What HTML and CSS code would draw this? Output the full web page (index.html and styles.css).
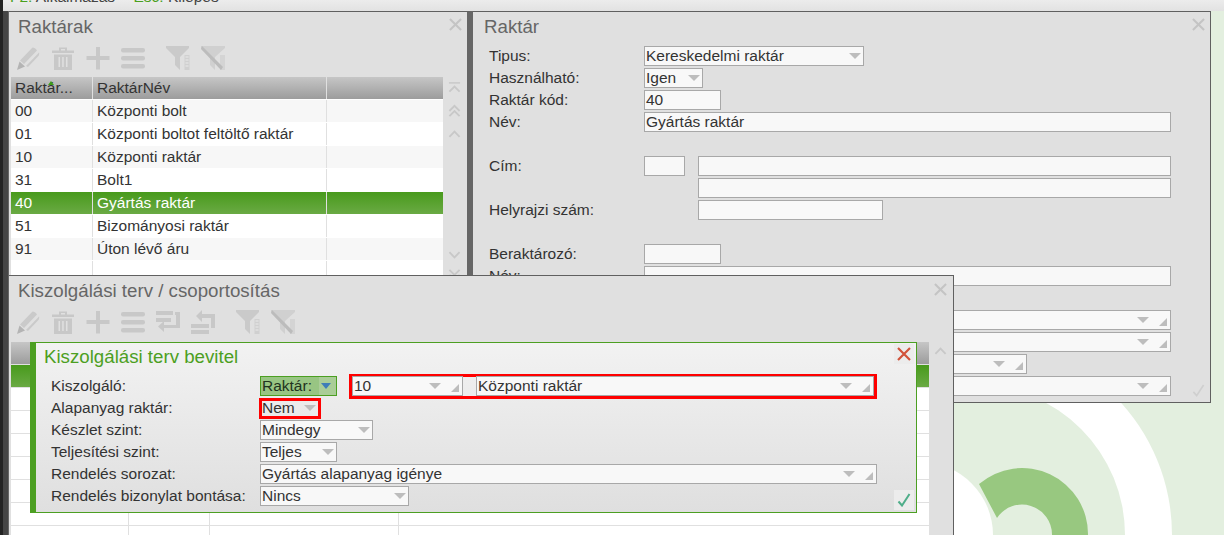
FILE: index.html
```html
<!DOCTYPE html>
<html lang="hu">
<head>
<meta charset="utf-8">
<title>Raktárak</title>
<link rel="stylesheet" href="styles.css">
</head>
<body>
<svg class="art" width="1224" height="535" viewBox="0 0 1224 535">
  <rect width="1224" height="535" fill="#e3efdf"/>
  <circle cx="975" cy="535" r="197" fill="#fff"/>
  <circle cx="975" cy="535" r="150" fill="#e3efdf"/>
  <path d="M979 484 A66 66 0 0 1 1088 535 L1052 535 A30 30 0 0 0 997 518 Z" fill="#98c880"/>
  <circle cx="920" cy="535" r="73" fill="#fff"/>
</svg>
<div class="edge"></div>
<div class="topbar"><span class="key">F2:</span> Alkalmazás <span class="sep"></span><span class="key">Esc:</span> Kilépés</div>

<svg class="defs" width="0" height="0">
  <defs>
    <symbol id="i-pencil" viewBox="0 0 24 24"><path d="M8 18 21 4.500c-1-2-3-3-4.500-3L4 14.500z M10 20 23 6.500c.5 1.500 0 3-1 4L12 21z" fill="#cacaca"/><path d="M3.500 15.500 9 20.500 1 24z" fill="#b4b4b4"/></symbol>
    <symbol id="i-trash" viewBox="0 0 24 24"><path d="M1 4.500h22v2.500H1z M8 4.500V1.500h8v3h-2V3h-4v1.500z" fill="#c8c8c8"/><path d="M3 8.500h18V24H3z" fill="#c8c8c8"/><path d="M7.500 11h1.500v10H7.500z M11.200 11h1.500v10h-1.500z M15 11h1.500v10H15z" fill="#e0e0e0"/></symbol>
    <symbol id="i-plus" viewBox="0 0 24 24"><path d="M10 1h4v9h9.500v4H14v9.500h-4V14H.500v-4H10z" fill="#c8c8c8"/></symbol>
    <symbol id="i-list" viewBox="0 0 24 24"><rect x="0" y="2" width="24" height="4.500" rx="2" fill="#c8c8c8"/><rect x="0" y="10" width="24" height="4.500" rx="2" fill="#c8c8c8"/><rect x="0" y="18" width="24" height="4.500" rx="2" fill="#c8c8c8"/></symbol>
    <symbol id="i-filter" viewBox="0 0 24 24"><path d="M0 0h23v2L14 11v13l-5-5v-8L0 2z" fill="#cacaca"/><path d="M18.500 9h5v15h-5z" fill="#d0d0d0"/><path d="M19.500 10.500h3v1h-3zm0 3h3v1h-3zm0 3h3v1h-3zm0 3h3v1h-3z" fill="#eaeaea"/></symbol>
    <symbol id="i-nofilter" viewBox="0 0 24 24"><path d="M0 0h24v2L14 11v13l-5-5v-8L0 2z" fill="#d0d0d0"/><path d="M19 9h5v15h-5z" fill="#d4d4d4"/><path d="M1 0 22 21l-2 3L0 3z" fill="#bcbcbc"/></symbol>
    <symbol id="i-swap1" viewBox="0 0 24 24"><path d="M0 1h17v4H0zM0 8h15v4H0z" fill="#c8c8c8"/><path d="M19 2h5v16H8v4L2 16.500 8 11v4h12V5h-1z" fill="#c8c8c8"/></symbol>
    <symbol id="i-swap2" viewBox="0 0 24 24"><path d="M0 14h18v4H0zM0 20h18v4H0z" fill="#c8c8c8"/><path d="M11 0v4h13v14h-4V8H11v4L5 6z" fill="#c8c8c8"/></symbol>
    <symbol id="i-top" viewBox="0 0 14 14"><path d="M1 1.500h12" stroke="#c8c8c8" stroke-width="1.600" fill="none"/><path d="M1.500 11 7 5.500l5.500 5.500" stroke="#c8c8c8" stroke-width="2" fill="none"/></symbol>
    <symbol id="i-dup" viewBox="0 0 14 14"><path d="M1.500 7 7 1.500 12.500 7M1.500 12.500 7 7l5.500 5.500" stroke="#c8c8c8" stroke-width="2" fill="none"/></symbol>
    <symbol id="i-up" viewBox="0 0 14 14"><path d="M1.500 10 7 4.500 12.500 10" stroke="#c8c8c8" stroke-width="2" fill="none"/></symbol>
    <symbol id="i-down" viewBox="0 0 14 14"><path d="M1.500 4 7 9.500 12.500 4" stroke="#c8c8c8" stroke-width="2" fill="none"/></symbol>
    <symbol id="i-ddn" viewBox="0 0 14 14"><path d="M1.500 1.500 7 7l5.500-5.500M1.500 7 7 12.500 12.500 7" stroke="#c8c8c8" stroke-width="2" fill="none"/></symbol>
    <symbol id="i-close" viewBox="0 0 14 14"><path d="M1 1 13 13M13 1 1 13" stroke="#c4c4c4" stroke-width="2.200" fill="none"/></symbol>
    <symbol id="i-check" viewBox="0 0 14 14"><path d="M1.500 8.500 5 12.500 12.500 1" stroke="#cfcfcf" stroke-width="1.800" fill="none"/></symbol>
  </defs>
</svg>

<section class="win win-a">
  <h2 class="win-title">Raktárak</h2>
  <svg class="win-close"><use href="#i-close"/></svg>
  <div class="toolbar">
    <svg class="tool"><use href="#i-pencil"/></svg>
    <svg class="tool"><use href="#i-trash"/></svg>
    <svg class="tool"><use href="#i-plus"/></svg>
    <svg class="tool"><use href="#i-list"/></svg>
    <svg class="tool tool-gap"><use href="#i-filter"/></svg>
    <svg class="tool"><use href="#i-nofilter"/></svg>
  </div>
  <div class="grid">
    <div class="row head"><div class="c1 sorted">Raktár...</div><div class="c2">RaktárNév</div><div class="c3"></div></div>
    <div class="row"><div class="c1">00</div><div class="c2">Központi bolt</div><div class="c3"></div></div>
    <div class="row odd"><div class="c1">01</div><div class="c2">Központi boltot feltöltő raktár</div><div class="c3"></div></div>
    <div class="row"><div class="c1">10</div><div class="c2">Központi raktár</div><div class="c3"></div></div>
    <div class="row odd"><div class="c1">31</div><div class="c2">Bolt1</div><div class="c3"></div></div>
    <div class="row sel"><div class="c1">40</div><div class="c2">Gyártás raktár</div><div class="c3"></div></div>
    <div class="row odd"><div class="c1">51</div><div class="c2">Bizományosi raktár</div><div class="c3"></div></div>
    <div class="row"><div class="c1">91</div><div class="c2">Úton lévő áru</div><div class="c3"></div></div>
    <div class="row odd"><div class="c1"></div><div class="c2"></div><div class="c3"></div></div>
  </div>
  <div class="scroller">
    <svg class="sc"><use href="#i-top"/></svg>
    <svg class="sc"><use href="#i-dup"/></svg>
    <svg class="sc"><use href="#i-up"/></svg>
    <svg class="sc sc-push"><use href="#i-down"/></svg>
    <svg class="sc"><use href="#i-ddn"/></svg>
  </div>
</section>

<section class="win win-b">
  <h2 class="win-title">Raktár</h2>
  <svg class="win-close"><use href="#i-close"/></svg>
  <div class="form form-b">
    <div class="f"><label>Tipus:</label><div class="box w220 dd">Kereskedelmi raktár<i class="arrow"></i></div></div>
    <div class="f"><label>Használható:</label><div class="box w59 dd">Igen<i class="arrow"></i></div></div>
    <div class="f"><label>Raktár kód:</label><div class="box w77">40</div></div>
    <div class="f"><label>Név:</label><div class="box w527">Gyártás raktár</div></div>
    <div class="f blank"></div>
    <div class="f"><label>Cím:</label><div class="box w41"></div><div class="box w473 ml13"></div></div>
    <div class="f"><label></label><div class="box w473 ml54"></div></div>
    <div class="f"><label>Helyrajzi szám:</label><div class="box w185 ml54"></div></div>
    <div class="f blank"></div>
    <div class="f"><label>Beraktározó:</label><div class="box w77"></div></div>
    <div class="f"><label>Név:</label><div class="box w527"></div></div>
    <div class="f blank"></div>
    <div class="f"><label></label><div class="box w527 dd res"><i class="arrow"></i><i class="grip"></i></div></div>
    <div class="f"><label></label><div class="box w527 dd res"><i class="arrow"></i><i class="grip"></i></div></div>
    <div class="f"><label></label><div class="box w383 dd res"><i class="arrow"></i><i class="grip"></i></div></div>
    <div class="f"><label></label><div class="box w527 dd res"><i class="arrow"></i><i class="grip"></i></div></div>
  </div>
  <svg class="ok-faint"><use href="#i-check"/></svg>
</section>

<section class="win win-c">
  <h2 class="win-title">Kiszolgálási terv / csoportosítás</h2>
  <svg class="win-close"><use href="#i-close"/></svg>
  <div class="toolbar">
    <svg class="tool"><use href="#i-pencil"/></svg>
    <svg class="tool"><use href="#i-trash"/></svg>
    <svg class="tool"><use href="#i-plus"/></svg>
    <svg class="tool"><use href="#i-list"/></svg>
    <svg class="tool"><use href="#i-swap1"/></svg>
    <svg class="tool"><use href="#i-swap2"/></svg>
    <svg class="tool tool-gap"><use href="#i-filter"/></svg>
    <svg class="tool"><use href="#i-nofilter"/></svg>
  </div>
  <div class="grid grid-c">
    <div class="row head"></div>
    <div class="row sel"></div>
    <div class="row blank-row"></div>
    <div class="row blank-row"></div>
    <div class="row blank-row"></div>
    <div class="row blank-row"></div>
    <div class="row blank-row"></div>
    <div class="row blank-row cols"><i></i><i></i><i></i></div>
    <div class="row blank-row cols"><i></i><i></i><i></i></div>
  </div>
  <div class="scroller scroller-c"><svg class="sc"><use href="#i-up"/></svg></div>
</section>

<section class="dialog">
  <h3 class="dlg-title">Kiszolgálási terv bevitel</h3>
  <button class="dlg-btn dlg-x" type="button" aria-label="Bezárás"><svg viewBox="0 0 14 14"><path d="M1 1 13 13M13 1 1 13" stroke="#d2533b" stroke-width="2.200" fill="none"/></svg></button>
  <div class="form form-d">
    <div class="f"><label>Kiszolgáló:</label>
      <div class="pick">Raktár:<span class="pick-arrow"></span></div>
      <div class="mark mark-wide">
        <div class="box w111 dd res">10<i class="arrow"></i><i class="grip"></i></div>
        <div class="box w398 dd res ml13">Központi raktár<i class="arrow"></i><i class="grip"></i></div>
      </div>
    </div>
    <div class="f"><label>Alapanyag raktár:</label><div class="mark mark-small"><div class="box plain">Nem<i class="arrow"></i></div></div></div>
    <div class="f"><label>Készlet szint:</label><div class="box w113 dd">Mindegy<i class="arrow"></i></div></div>
    <div class="f"><label>Teljesítési szint:</label><div class="box w77 dd">Teljes<i class="arrow"></i></div></div>
    <div class="f"><label>Rendelés sorozat:</label><div class="box w617 dd res">Gyártás alapanyag igénye<i class="arrow"></i><i class="grip"></i></div></div>
    <div class="f"><label>Rendelés bizonylat bontása:</label><div class="box w149 dd">Nincs<i class="arrow"></i></div></div>
  </div>
  <button class="dlg-btn dlg-ok" type="button" aria-label="Mentés"><svg viewBox="0 0 14 14"><path d="M1.500 8.500 5 12.500 12.500 1" stroke="#4fae8a" stroke-width="2" fill="none"/></svg></button>
</section>
</body>
</html>
```
FILE: styles.css
```css
* { box-sizing: border-box; }
html, body { margin: 0; height: 535px; overflow: hidden; }
body {
  position: relative;
  width: 1224px;
  background: #e3efdf;
  font-family: "Liberation Sans", Arial, sans-serif;
  font-size: 15.5px;
  color: #333;
}
.art { position: absolute; left: 0; top: 0; display: block; }
.defs { position: absolute; }
.edge { position: absolute; left: 0; top: 0; width: 9px; height: 535px; background: linear-gradient(90deg, #232323 0 3px, #454545 3px 8px, #666 8px 9px); }
.topbar {
  position: absolute; left: 3px; top: 0; right: 0; height: 11px;
  background: linear-gradient(#ececec, #e2e2e2); overflow: hidden; padding-left: 7px;
  line-height: 1px; font-size: 15.5px; color: #444; white-space: pre;
}
.topbar::before { content: ""; display: block; margin-top: -4px; }
.key { color: #4aa01e; }
.sep { display: inline-block; width: 14px; }

.win { position: absolute; background: #e0e0e0; border: 1px solid #606060; }
.win-a { left: 9px; top: 11px; width: 464px; height: 270px; border-left: 0; border-right: 6px solid #666; }
.win-b { left: 473px; top: 11px; width: 738px; height: 392px; border-left: 0; }
.win-c { left: 9px; top: 275px; width: 945px; height: 270px; border-left: 0; }
.win-title { position: absolute; left: 9px; top: 4px; margin: 0; font-size: 18.7px; line-height: 22px; font-weight: 400; color: #666; }
.win-b .win-title { left: 11px; }
.win-close { position: absolute; top: 6px; right: 5px; width: 13px; height: 13px; }
.win-c .win-close { right: 6px; top: 7px; }

.toolbar { position: absolute; left: 7px; top: 34px; display: flex; gap: 11px; height: 24px; align-items: center; }
.tool { width: 24px; height: 24px; display: block; flex: none; }
.tool-gap { margin-left: 10px; }

.grid { position: absolute; left: 2px; top: 65px; width: 432px; overflow: hidden; bottom: 0; background: #fff; }
.row { display: flex; gap: 1px; height: 22px; margin-bottom: 1px; background: #e0e0e0; line-height: 22px; }
.row > div { padding-left: 4px; overflow: hidden; white-space: nowrap; color: #333; background: #f7f7f7; }
.row.odd > div { background: #fff; }
.c1 { width: 81px; flex: none; }
.c2 { width: 233px; flex: none; }
.c3 { flex: 1; }
.row.head > div { background: linear-gradient(#c6c6c6, #9c9c9c); color: #333; }
.row.sel > div { background: linear-gradient(#489a1c, #6aaa44); color: #fff; }
.sorted { position: relative; }
.sorted::after { content: ""; position: absolute; left: 37px; top: 4px; border: 3px solid transparent; border-top: 0; border-bottom: 4px solid #3f9c1a; }

.scroller { position: absolute; left: 439px; top: 65px; bottom: 0; width: 13px; display: flex; flex-direction: column; gap: 9px; padding-top: 4px; }
.sc { width: 13px; height: 14px; display: block; flex: none; }
.sc-push { margin-top: 98px; margin-bottom: -3px; }
.scroller-c { left: 925px; padding-top: 3px; }

.grid-c { width: 918px; top: 66px; background: #e0e0e0; }
.grid-c .head { background: linear-gradient(#c6c6c6, #9c9c9c); }
.grid-c .sel { background: linear-gradient(#489a1c, #6aaa44); }
.grid-c .blank-row { background: #fff; }
.cols { position: relative; }
.cols i { position: absolute; top: 0; bottom: -1px; width: 1px; background: #e0e0e0; }
.cols i:nth-child(1) { left: 117px; }
.cols i:nth-child(2) { left: 198px; }
.cols i:nth-child(3) { left: 387px; }

.form { position: absolute; left: 16px; top: 33px; }
.form-b { top: 34px; }
.f { display: flex; height: 20px; margin-bottom: 2px; align-items: stretch; line-height: 20px; }
.f label { width: 155px; flex: none; color: #333; white-space: nowrap; }
.box { position: relative; height: 20px; background: #f8f8f8; border: 1px solid #a8a8a8; padding-left: 1px; line-height: 18px; color: #333; white-space: nowrap; flex: none; }
.w41 { width: 41px; } .w59 { width: 59px; } .w77 { width: 77px; }
.w111 { width: 111px; } .w113 { width: 113px; } .w149 { width: 149px; } .w185 { width: 185px; }
.w220 { width: 220px; } .w383 { width: 383px; } .w398 { width: 398px; } .w473 { width: 473px; }
.w527 { width: 527px; } .w617 { width: 617px; }
.ml13 { margin-left: 13px; } .ml54 { margin-left: 54px; }
.arrow { position: absolute; right: 2px; top: 6px; width: 0; height: 0; border: 6px solid transparent; border-top: 6px solid #bdbdbd; border-bottom: 0; }
.res .arrow { right: 21px; }
.grip { position: absolute; right: 3px; bottom: 3px; width: 0; height: 0; border-left: 8px solid transparent; border-bottom: 8px solid #bdbdbd; }
.ok-faint { position: absolute; right: 5px; bottom: 5px; width: 13px; height: 13px; }

.dialog {
  position: absolute; left: 30px; top: 342px; width: 887px; height: 171px;
  border: 1px solid #4c9f22; border-left-width: 6px;
  background: linear-gradient(#f2f2f2, #dfdfdf);
}
.dlg-title { position: absolute; left: 8px; top: 3px; margin: 0; font-size: 18.7px; line-height: 22px; font-weight: 400; color: #4c9f22; }
.dlg-btn { position: absolute; right: 2px; width: 20px; height: 20px; padding: 3px; border: 0; background: #ececec; }
.dlg-btn svg { display: block; width: 14px; height: 14px; }
.dlg-x { top: 1px; }
.dlg-ok { bottom: 2px; }
.form-d { left: 15px; top: 33px; }
.form-d .f label { width: 209px; }
.pick { display: flex; width: 77px; height: 20px; background: linear-gradient(90deg, #98c583 0 58px, #aacd98 58px); border: 1px solid #4c9f22; padding-left: 1px; line-height: 18px; color: #1f3320; position: relative; flex: none; }
.pick-arrow { position: absolute; right: 5px; top: 6px; border: 5px solid transparent; border-top: 6px solid #3f7db8; border-bottom: 0; }
.mark { display: flex; outline: 3px solid #f00; outline-offset: -3px; flex: none; position: relative; }
.mark-wide { margin: -2px 0 -3px 12px; height: 25px; padding: 2px 3px 3px; }
.mark-small { margin: 0 0 -1px -1px; width: 62px; height: 21px; padding: 0; }
.plain { width: 62px; height: 21px; border: 0; background: transparent; padding-left: 3px; line-height: 20px; }
.plain .arrow { right: 5px; top: 7px; }
```
